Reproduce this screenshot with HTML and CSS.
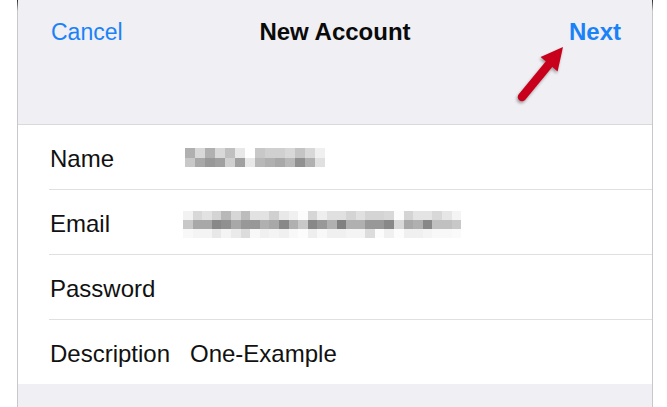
FILE: index.html
```html
<!DOCTYPE html>
<html lang="en">
<head>
    <meta charset="UTF-8">
    <meta name="viewport" content="width=device-width, initial-scale=1.0">
    <title>New Account</title>
    <link rel="stylesheet" href="styles.css">
</head>
<body>
    <div class="sheet">
        <header class="nav">
            <span class="nav-btn">Cancel</span>
            <span class="nav-title">New Account</span>
            <span class="nav-btn nav-btn-strong">Next</span>
            <!-- red pointer onto the Next button -->
            <svg class="pointer" width="60" height="65" viewBox="0 0 60 65">
                <path d="M12 57 L40 23" stroke="#c8001c" stroke-width="8.5" stroke-linecap="round" fill="none"/>
                <polygon points="53,7 47.6,31.5 30.6,17" fill="#c8001c"/>
            </svg>
        </header>

        <div class="form-group">
            <div class="row">
                <div class="row-inner">
                    <span class="label">Name</span>
                    <div class="mosaic mosaic-name" id="nameMosaic"></div>
                </div>
            </div>
            <div class="row">
                <div class="row-inner">
                    <span class="label">Email</span>
                    <div class="mosaic mosaic-email" id="emailMosaic"></div>
                </div>
            </div>
            <div class="row">
                <div class="row-inner">
                    <span class="label">Password</span>
                </div>
            </div>
            <div class="row">
                <div class="row-inner">
                    <span class="label">Description</span>
                    <span class="value">One-Example</span>
                </div>
            </div>
        </div>
    </div>

    <script>
        // blurred (pixelated) values, one grey shade per block
        const nameBlocks = [
            ['b0','d8','b0','d8','c0','e8','ff','c8','d0','d0','d8','c4','d8','f0'],
            ['c8','a8','98','a0','d0','a0','e8','b8','b0','a8','b8','90','b0','e0']
        ];
        const emailBlocks = [
            ['f2','d8','e2','d4','b8','d6','bc','e2','e2','d0','e8','f0','fc','d6','ee','e0','e0','d4','e0','d4','d4','d8','fc','d4','e4','e4','d8','e6','f4'],
            ['c8','a8','a8','88','90','a8','98','98','b0','a8','88','b0','c8','88','98','b0','80','b0','b0','98','98','88','d8','a8','b0','88','c0','c0','c8'],
            ['f8','f4','f4','e8','f4','ea','dc','f8','f0','f4','f0','f8','fc','ee','f8','f0','f0','f4','f4','dc','fc','f0','fc','f0','f0','f4','f8','f8','fa']
        ];

        function fillMosaic(id, rows) {
            const box = document.getElementById(id);
            rows.forEach(row => {
                row.forEach(shade => {
                    const cell = document.createElement('span');
                    cell.style.background = '#' + shade + shade + shade;
                    box.appendChild(cell);
                });
            });
        }

        fillMosaic('nameMosaic', nameBlocks);
        fillMosaic('emailMosaic', emailBlocks);
    </script>
</body>
</html>
```

FILE: styles.css
```css
* {
    box-sizing: border-box;
}

body {
    margin: 0;
    background: #fff;
    font-family: "Liberation Sans", Arial, sans-serif;
    color: #111;
}

.sheet {
    margin-left: 17px;
    width: 636px;
    min-height: 100vh;
    background: #efeff4;
    border-style: solid;
    border-width: 0 1px;
    border-image: linear-gradient(to bottom, #1a1a1a 0, #c8c8cc 12px, #c8c8cc 100%) 1;
}

/* top bar */
.nav {
    position: relative;
    height: 125px;
    padding: 18px 31px 0 33px;
    display: grid;
    grid-template-columns: 1fr auto 1fr;
    align-items: baseline;
    line-height: 28px;
    border-bottom: 1px solid #d9d9dd;
}

.nav-btn {
    color: #1a82f7;
    font-size: 23px;
    justify-self: start;
}

.nav-btn-strong {
    font-size: 24px;
    font-weight: bold;
    justify-self: end;
}

.nav-title {
    font-size: 24px;
    font-weight: bold;
    color: #0a0a0a;
    margin-left: -2px;
}

.pointer {
    position: absolute;
    left: 492px;
    top: 40px;
    filter: drop-shadow(-1px 2px 1.5px rgba(0, 0, 0, 0.35));
}

/* form rows */
.form-group {
    background: #fff;
}

.row {
    padding-left: 31px;
}

.row-inner {
    height: 65px;
    display: flex;
    align-items: center;
    padding-top: 3px;
    border-bottom: 1px solid #e0e0e2;
    font-size: 24px;
}

.row:last-child .row-inner {
    height: 64px;
    border-bottom: none;
}

.label {
    width: 135px;
    flex-shrink: 0;
    padding-left: 1px;
}

.value {
    padding-left: 6px;
    color: #111;
}

.mosaic {
    display: grid;
}

.mosaic-name {
    grid-template-columns: repeat(14, 10px);
    grid-auto-rows: 9.5px;
    margin-top: -2px;
    margin-left: 1px;
}

.mosaic-email {
    grid-template-columns: repeat(29, 9.6px);
    grid-auto-rows: 9px;
    margin-top: 2px;
    margin-left: -1px;
}
```
